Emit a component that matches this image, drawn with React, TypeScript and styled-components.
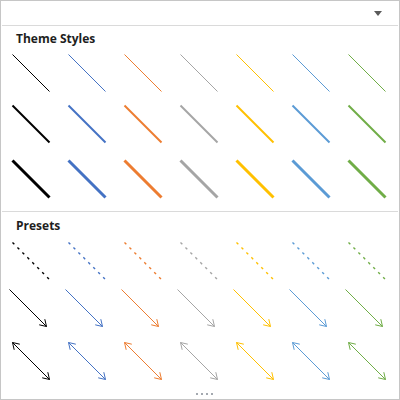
import React from "react";
import styled, { createGlobalStyle } from "styled-components";

const Global = createGlobalStyle`
  html, body { margin: 0; padding: 0; background: #ffffff; }
  * { box-sizing: border-box; }
`;

const COLORS = ["#000000", "#4472c4", "#ed7d31", "#a5a5a5", "#ffc000", "#5b9bd5", "#70ad47"];

const Panel = styled.div`
  width: 400px;
  height: 400px;
  border: 1px solid #c6c6c6;
  background: #ffffff;
  display: flex;
  flex-direction: column;
  font-family: "Open Sans", "Noto Sans", sans-serif;
  overflow: hidden;
`;

const TopBar = styled.div`
  height: 24px;
  display: flex;
  align-items: flex-start;
  justify-content: flex-end;
  padding: 10px 17px 0 0;
`;

const DropArrow = styled.div`
  width: 0;
  height: 0;
  border-left: 4px solid transparent;
  border-right: 4px solid transparent;
  border-top: 5px solid #5a5a5a;
`;

const Separator = styled.div<{ $mt?: number }>`
  height: 1px;
  margin: ${(p) => p.$mt ?? 0}px 1px 0 1px;
  background: #dadada;
`;

const Header = styled.div<{ $pt: number }>`
  padding: ${(p) => p.$pt}px 0 0 15px;
  height: ${(p) => p.$pt + 16}px;
  font-size: 12px;
  line-height: 16px;
  font-weight: 700;
  color: #1e1e1e;
`;

const Row = styled.div<{ $mt: number }>`
  display: flex;
  padding-left: 7px;
  margin-top: ${(p) => p.$mt}px;
  height: 40px;
`;

const Cell = styled.svg`
  width: 56px;
  height: 40px;
  flex: 0 0 56px;
  overflow: visible;
  display: block;
`;

const Grip = styled.div`
  margin-top: 12px;
  display: flex;
  justify-content: center;
  gap: 3px;
  padding-left: 8px;
`;

const GripDot = styled.span`
  width: 2px;
  height: 2px;
  background: #a4a9b0;
`;

type Kind = "solid" | "dash" | "arrow" | "double";

function Glyph({ color, width, kind, x0 }: { color: string; width: number; kind: Kind; x0: number }) {
  const y0 = 1.5;
  const x1 = x0 + 37;
  const y1 = y0 + 37;
  return (
    <Cell viewBox="0 0 56 40">
      <line
        x1={x0}
        y1={y0}
        x2={x1}
        y2={y1}
        stroke={color}
        strokeWidth={kind === "dash" ? 1.4 : width}
        strokeDasharray={kind === "dash" ? "2.6 4.4" : undefined}
      />
      {(kind === "arrow" || kind === "double") && (
        <polyline
          points={`${x1 - 7.3},${y1 - 1.7} ${x1},${y1} ${x1 - 1.7},${y1 - 7.3}`}
          fill="none"
          stroke={color}
          strokeWidth={1}
        />
      )}
      {kind === "double" && (
        <polyline
          points={`${x0 + 7.3},${y0 + 1.7} ${x0},${y0} ${x0 + 1.7},${y0 + 7.3}`}
          fill="none"
          stroke={color}
          strokeWidth={1}
        />
      )}
    </Cell>
  );
}

function GlyphRow({ mt, width, kind, x0 = 4.5 }: { mt: number; width: number; kind: Kind; x0?: number }) {
  return (
    <Row $mt={mt}>
      {COLORS.map((c) => (
        <Glyph key={c} color={c} width={width} kind={kind} x0={x0} />
      ))}
    </Row>
  );
}

export default function App() {
  return (
    <>
      <Global />
      <Panel>
        <TopBar>
          <DropArrow />
        </TopBar>
        <Separator />
        <Header $pt={5}>Theme Styles</Header>
        <GlyphRow mt={6} width={1} kind="solid" />
        <GlyphRow mt={11} width={2} kind="solid" />
        <GlyphRow mt={15} width={3} kind="solid" />
        <Separator $mt={12} />
        <Header $pt={6}>Presets</Header>
        <GlyphRow mt={7} width={1} kind="dash" />
        <GlyphRow mt={7} width={1} kind="arrow" x0={1.5} />
        <GlyphRow mt={13} width={1} kind="double" />
        <Grip>
          <GripDot />
          <GripDot />
          <GripDot />
          <GripDot />
        </Grip>
      </Panel>
    </>
  );
}
